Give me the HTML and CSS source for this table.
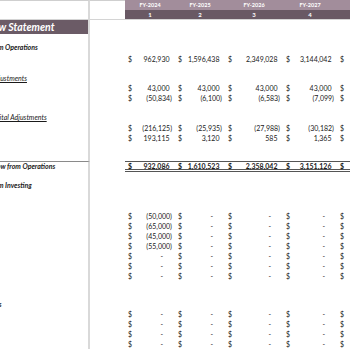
FILE: index.html
```html
<!DOCTYPE html>
<html>
<head>
<meta charset="utf-8">
<link rel="stylesheet" href="styles.css">
</head>
<body>
<div class="sheet">
  <div class="row hdr1">
    <div class="lab"></div><div class="sp"></div>
    <div class="h">FY-2024</div><div class="h">FY-2025</div><div class="h">FY-2026</div><div class="h">FY-2027</div><div class="h"></div>
  </div>
  <div class="row hdr2">
    <div class="lab"></div><div class="sp"></div>
    <div class="h">1</div><div class="h">2</div><div class="h">3</div><div class="h">4</div><div class="h"></div>
  </div>
  <div class="row title"><div class="lab">Cash Flow Statement</div></div>
  <div class="gap g8"><div class="lab"></div></div>
  <div class="row"><div class="lab sec">Cash Flow from Operations</div></div>
  <div class="gap g2"><div class="lab"></div></div>
  <div class="row">
    <div class="lab"></div><div class="sp"></div>
    <div class="c"><span>$</span><span class="p">962,930</span></div>
    <div class="c"><span>$</span><span class="p">1,596,438</span></div>
    <div class="c"><span>$</span><span class="p">2,349,028</span></div>
    <div class="c"><span>$</span><span class="p">3,144,042</span></div>
    <div class="c"><span>$</span></div>
  </div>
  <div class="gap g9"><div class="lab"></div></div>
  <div class="row"><div class="lab sub nc">Non-Cash Adjustments</div></div>
  <div class="row">
    <div class="lab"></div><div class="sp"></div>
    <div class="c"><span>$</span><span class="p">43,000</span></div>
    <div class="c"><span>$</span><span class="p">43,000</span></div>
    <div class="c"><span>$</span><span class="p">43,000</span></div>
    <div class="c"><span>$</span><span class="p">43,000</span></div>
    <div class="c"><span>$</span></div>
  </div>
  <div class="row">
    <div class="lab"></div><div class="sp"></div>
    <div class="c"><span>$</span><span>(50,834)</span></div>
    <div class="c"><span>$</span><span>(6,100)</span></div>
    <div class="c"><span>$</span><span>(6,583)</span></div>
    <div class="c"><span>$</span><span>(7,099)</span></div>
    <div class="c"><span>$</span></div>
  </div>
  <div class="gap g9"><div class="lab"></div></div>
  <div class="row"><div class="lab sub wc">Working Capital Adjustments</div></div>
  <div class="gap g1"><div class="lab"></div></div>
  <div class="row">
    <div class="lab"></div><div class="sp"></div>
    <div class="c"><span>$</span><span>(216,125)</span></div>
    <div class="c"><span>$</span><span>(25,935)</span></div>
    <div class="c"><span>$</span><span>(27,988)</span></div>
    <div class="c"><span>$</span><span>(30,182)</span></div>
    <div class="c"><span>$</span></div>
  </div>
  <div class="row">
    <div class="lab"></div><div class="sp"></div>
    <div class="c"><span>$</span><span class="p">193,115</span></div>
    <div class="c"><span>$</span><span class="p">3,120</span></div>
    <div class="c"><span>$</span><span class="p">585</span></div>
    <div class="c"><span>$</span><span class="p">1,365</span></div>
    <div class="c"><span>$</span></div>
  </div>
  <div class="gap g18"><div class="lab"></div></div>
  <div class="row total">
    <div class="lab sec net">Net Cash Flow from Operations</div><div class="sp"></div>
    <div class="c"><span>$</span><span class="p">932,086</span></div>
    <div class="c"><span>$</span><span class="p">1,610,523</span></div>
    <div class="c"><span>$</span><span class="p">2,358,042</span></div>
    <div class="c"><span>$</span><span class="p">3,151,126</span></div>
    <div class="c"><span>$</span></div>
  </div>
  <div class="gap g8"><div class="lab"></div></div>
  <div class="row"><div class="lab sec">Cash Flow from Investing</div></div>
  <div class="gap g21"><div class="lab"></div></div>
  <div class="row">
    <div class="lab"></div><div class="sp"></div>
    <div class="c"><span>$</span><span>(50,000)</span></div>
    <div class="c"><span>$</span><span class="z">-</span></div>
    <div class="c"><span>$</span><span class="z">-</span></div>
    <div class="c"><span>$</span><span class="z">-</span></div>
    <div class="c"><span>$</span></div>
  </div>
  <div class="row">
    <div class="lab"></div><div class="sp"></div>
    <div class="c"><span>$</span><span>(65,000)</span></div>
    <div class="c"><span>$</span><span class="z">-</span></div>
    <div class="c"><span>$</span><span class="z">-</span></div>
    <div class="c"><span>$</span><span class="z">-</span></div>
    <div class="c"><span>$</span></div>
  </div>
  <div class="row">
    <div class="lab"></div><div class="sp"></div>
    <div class="c"><span>$</span><span>(45,000)</span></div>
    <div class="c"><span>$</span><span class="z">-</span></div>
    <div class="c"><span>$</span><span class="z">-</span></div>
    <div class="c"><span>$</span><span class="z">-</span></div>
    <div class="c"><span>$</span></div>
  </div>
  <div class="row">
    <div class="lab"></div><div class="sp"></div>
    <div class="c"><span>$</span><span>(55,000)</span></div>
    <div class="c"><span>$</span><span class="z">-</span></div>
    <div class="c"><span>$</span><span class="z">-</span></div>
    <div class="c"><span>$</span><span class="z">-</span></div>
    <div class="c"><span>$</span></div>
  </div>
  <div class="row">
    <div class="lab"></div><div class="sp"></div>
    <div class="c"><span>$</span><span class="z">-</span></div>
    <div class="c"><span>$</span><span class="z">-</span></div>
    <div class="c"><span>$</span><span class="z">-</span></div>
    <div class="c"><span>$</span><span class="z">-</span></div>
    <div class="c"><span>$</span></div>
  </div>
  <div class="row">
    <div class="lab"></div><div class="sp"></div>
    <div class="c"><span>$</span><span class="z">-</span></div>
    <div class="c"><span>$</span><span class="z">-</span></div>
    <div class="c"><span>$</span><span class="z">-</span></div>
    <div class="c"><span>$</span><span class="z">-</span></div>
    <div class="c"><span>$</span></div>
  </div>
  <div class="row">
    <div class="lab"></div><div class="sp"></div>
    <div class="c"><span>$</span><span class="z">-</span></div>
    <div class="c"><span>$</span><span class="z">-</span></div>
    <div class="c"><span>$</span><span class="z">-</span></div>
    <div class="c"><span>$</span><span class="z">-</span></div>
    <div class="c"><span>$</span></div>
  </div>
  <div class="gap g19"><div class="lab"></div></div>
  <div class="row r9"><div class="lab sec fin">Cash Flow from Financings</div></div>
  <div class="row">
    <div class="lab"></div><div class="sp"></div>
    <div class="c"><span>$</span><span class="z">-</span></div>
    <div class="c"><span>$</span><span class="z">-</span></div>
    <div class="c"><span>$</span><span class="z">-</span></div>
    <div class="c"><span>$</span><span class="z">-</span></div>
    <div class="c"><span>$</span></div>
  </div>
  <div class="row">
    <div class="lab"></div><div class="sp"></div>
    <div class="c"><span>$</span><span class="z">-</span></div>
    <div class="c"><span>$</span><span class="z">-</span></div>
    <div class="c"><span>$</span><span class="z">-</span></div>
    <div class="c"><span>$</span><span class="z">-</span></div>
    <div class="c"><span>$</span></div>
  </div>
  <div class="row">
    <div class="lab"></div><div class="sp"></div>
    <div class="c"><span>$</span><span class="z">-</span></div>
    <div class="c"><span>$</span><span class="z">-</span></div>
    <div class="c"><span>$</span><span class="z">-</span></div>
    <div class="c"><span>$</span><span class="z">-</span></div>
    <div class="c"><span>$</span></div>
  </div>
  <div class="row">
    <div class="lab"></div><div class="sp"></div>
    <div class="c"><span>$</span><span class="z">-</span></div>
    <div class="c"><span>$</span><span class="z">-</span></div>
    <div class="c"><span>$</span><span class="z">-</span></div>
    <div class="c"><span>$</span><span class="z">-</span></div>
    <div class="c"><span>$</span></div>
  </div>
</div>
</body>
</html>
```

FILE: styles.css
```css
html, body {
  margin: 0;
  padding: 0;
  background: #fff;
}
body {
  font-family: Lato, "Liberation Sans", sans-serif;
  font-size: 7px;
  color: #1a1a1a;
  width: 350px;
  height: 350px;
  overflow: hidden;
}
.sheet {
  width: 350px;
}
.row, .gap {
  display: grid;
  grid-template-columns: 90px 35px 50px 50px 58px 54px 1fr;
  height: 10px;
  line-height: 10px;
}
.lab {
  box-sizing: border-box;
  height: 100%;
  border-right: 2px solid #d9d9d9;
  background-clip: padding-box;
  overflow: hidden;
  white-space: nowrap;
  text-indent: -42px;
}
.lab.nc { text-indent: -40px; }
.lab.wc { text-indent: -38px; }
.lab.net { text-indent: -37px; }
.lab.fin { text-indent: -77px; }
.g1 { height: 1px; }
.g2 { height: 2px; }
.g8 { height: 8px; }
.g9 { height: 9px; }
.g18 { height: 18px; }
.g19 { height: 19px; }
.g21 { height: 21px; }
.r9 { height: 9px; line-height: 9px; }

.hdr1 .lab, .hdr1 .sp {
  box-sizing: border-box;
  border-top: 1px solid #cfcfcf;
}
.hdr1 .h {
  background: #a28d9b;
  color: #fff;
  font-weight: 700;
  font-size: 5.5px;
  text-align: center;
}
.hdr2 .lab, .hdr2 .sp, .hdr2 .h {
  box-sizing: border-box;
  border-bottom: 1px solid #d4d4d4;
}
.hdr2 .h {
  background: #695964;
  background-clip: padding-box;
  color: #fff;
  font-weight: 700;
  font-size: 6px;
  line-height: 9px;
  text-align: center;
}
.title {
  height: 14px;
  line-height: 14px;
}
.title .lab {
  background: #6b5b66;
  background-clip: padding-box;
  color: #fff;
  font-weight: 700;
  font-style: italic;
  font-size: 10.5px;
  text-indent: -39px;
}
.sec {
  font-weight: 700;
  font-style: italic;
}
.sub {
  font-style: italic;
  text-decoration: underline;
}
.c {
  display: flex;
  justify-content: space-between;
  padding: 0 3px;
}
.c .p {
  padding-right: 2.5px;
}
.c .z {
  padding-right: 9px;
}
.total {
  height: 11px;
  line-height: 9px;
}
.total .lab {
  border-top: 1px solid #8a8a8a;
}
.total .c {
  box-sizing: border-box;
  height: 11px;
  border-top: 1px solid #555;
  border-bottom: 3px double #555;
  font-weight: 700;
}
```
